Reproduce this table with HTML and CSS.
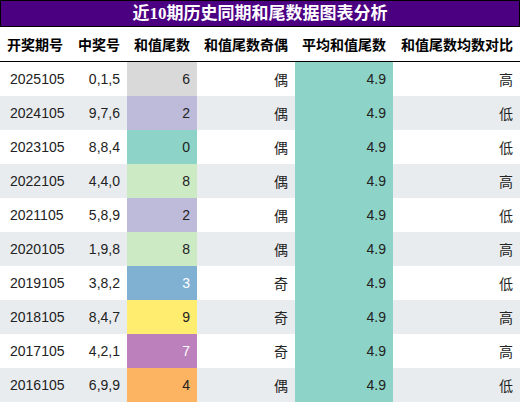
FILE: index.html
```html
<!DOCTYPE html>
<html lang="zh-CN">
<head>
    <meta charset="UTF-8">
    <title>近10期历史同期和尾数据图表分析</title>
    <link rel="stylesheet" href="styles.css">
</head>
<body>
    <div class="title">近10期历史同期和尾数据图表分析</div>
    <table class="stats">
        <colgroup>
            <col class="w-issue"><col class="w-nums"><col class="w-tail">
            <col class="w-parity"><col class="w-avg"><col class="w-cmp">
        </colgroup>
        <thead>
            <tr>
                <th class="first">开奖期号</th>
                <th>中奖号</th>
                <th>和值尾数</th>
                <th>和值尾数奇偶</th>
                <th>平均和值尾数</th>
                <th>和值尾数均数对比</th>
            </tr>
        </thead>
        <tbody>
            <tr><td class="first">2025105</td><td>0,1,5</td><td class="t6">6</td><td>偶</td><td class="avg">4.9</td><td>高</td></tr>
            <tr><td class="first">2024105</td><td>9,7,6</td><td class="t2">2</td><td>偶</td><td class="avg">4.9</td><td>低</td></tr>
            <tr><td class="first">2023105</td><td>8,8,4</td><td class="t0">0</td><td>偶</td><td class="avg">4.9</td><td>低</td></tr>
            <tr><td class="first">2022105</td><td>4,4,0</td><td class="t8">8</td><td>偶</td><td class="avg">4.9</td><td>高</td></tr>
            <tr><td class="first">2021105</td><td>5,8,9</td><td class="t2">2</td><td>偶</td><td class="avg">4.9</td><td>低</td></tr>
            <tr><td class="first">2020105</td><td>1,9,8</td><td class="t8">8</td><td>偶</td><td class="avg">4.9</td><td>高</td></tr>
            <tr><td class="first">2019105</td><td>3,8,2</td><td class="t3">3</td><td>奇</td><td class="avg">4.9</td><td>低</td></tr>
            <tr><td class="first">2018105</td><td>8,4,7</td><td class="t9">9</td><td>奇</td><td class="avg">4.9</td><td>高</td></tr>
            <tr><td class="first">2017105</td><td>4,2,1</td><td class="t7">7</td><td>奇</td><td class="avg">4.9</td><td>高</td></tr>
            <tr><td class="first">2016105</td><td>6,9,9</td><td class="t4">4</td><td>偶</td><td class="avg">4.9</td><td>低</td></tr>
        </tbody>
    </table>
</body>
</html>
```

FILE: styles.css
```css
body {
    margin: 0;
    background: #fff;
    font-family: "Liberation Sans", "Noto Sans CJK SC", sans-serif;
    color: #222;
}
.title {
    height: 25px;
    line-height: 25px;
    border: 1px solid #000;
    background: #4b0082;
    color: #fff;
    text-align: center;
    font-family: "Liberation Serif", "Noto Sans CJK SC", serif;
    font-size: 17px;
    font-weight: bold;
}
.stats {
    width: 520px;
    table-layout: fixed;
    border-collapse: collapse;
    font-size: 14px;
}
.w-issue { width: 71px; }
.w-nums { width: 56px; }
.w-tail { width: 70px; }
.w-parity { width: 98px; }
.w-avg { width: 98px; }
.w-cmp { width: 127px; }
th, td {
    padding: 0 7px;
    text-align: right;
    white-space: nowrap;
}
th {
    height: 34px;
    color: #000;
    font-weight: bold;
    border-bottom: 1px solid #000;
}
td {
    height: 34px;
}
th.first, td.first {
    text-align: left;
}
td.first {
    padding-left: 10px;
}
tbody tr:nth-child(even) {
    background: #e9ecef;
}
.avg { background: #8dd3c7; }
.t0 { background: #8dd3c7; }
.t2 { background: #bebada; }
.t3 { background: #80b1d3; color: #fff; }
.t4 { background: #fdb462; }
.t6 { background: #d9d9d9; }
.t7 { background: #bc80bd; color: #fff; }
.t8 { background: #ccebc5; }
.t9 { background: #ffed6f; }
```
